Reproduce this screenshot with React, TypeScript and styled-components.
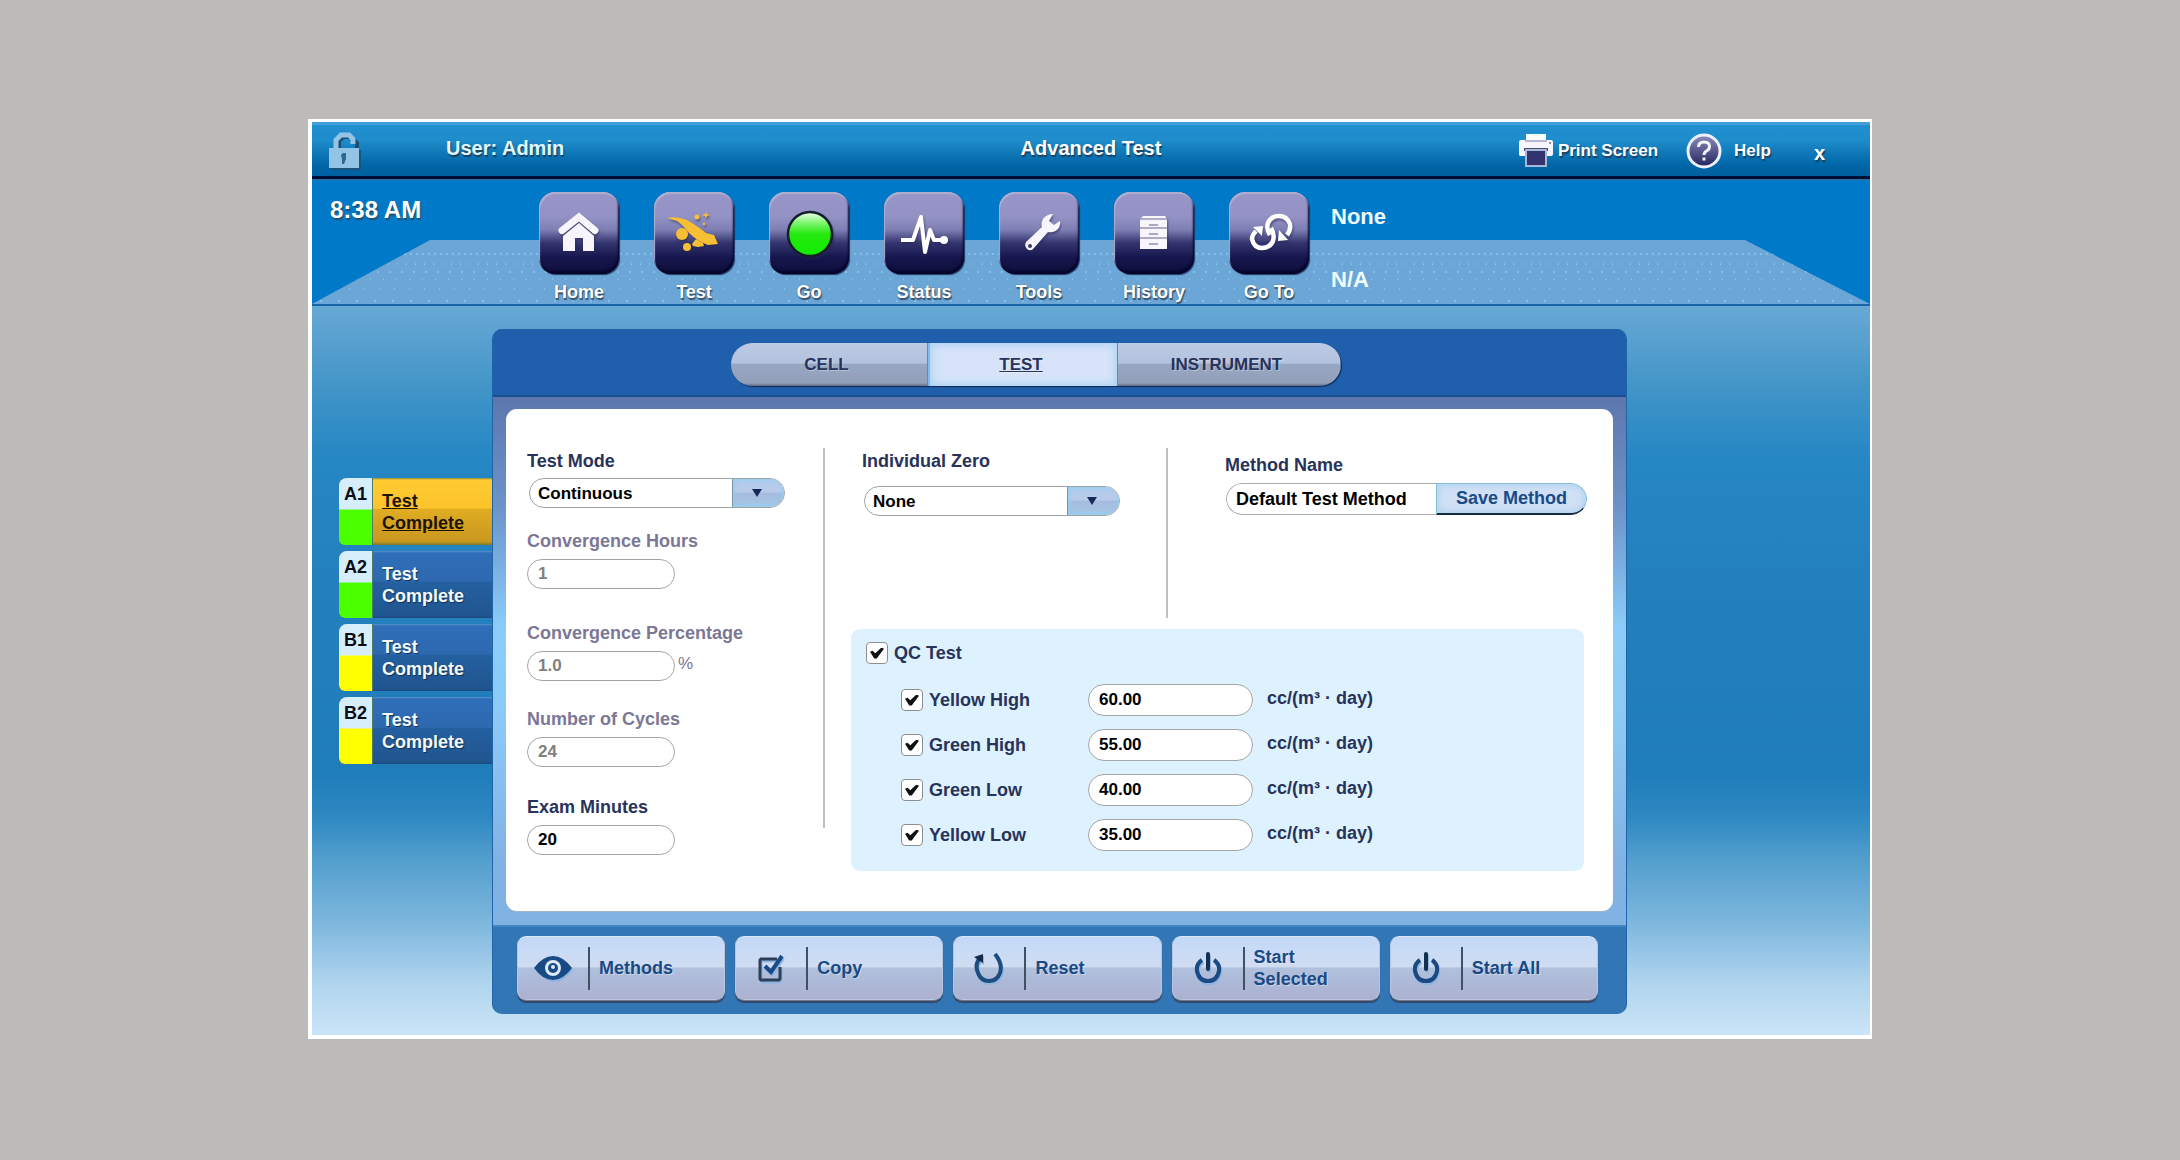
import React, { useState } from 'react';
import styled, { createGlobalStyle, css } from 'styled-components';

const font = '"Liberation Sans", Arial, sans-serif';
const ink = '#27335a';

const GlobalStyle = createGlobalStyle`
  *, *::before, *::after { box-sizing: border-box; }
  body { margin: 0; background: #bcbbb9; font-family: ${font}; font-weight: 700; }
  button, input, select { font-family: inherit; font-weight: inherit; margin: 0; }
`;

const Frame = styled.main`
  max-width: 1564px;
  margin: 119px auto;
  border: solid #fff;
  border-width: 3px 2px 4px 4px;
`;

/* ---------- title bar ---------- */
const TitleBar = styled.header`
  display: grid;
  grid-template-columns: 1fr auto 1fr;
  align-items: center;
  height: 58px;
  padding: 0 45px 3px 17px;
  border-top: 3px solid #45a0da;
  border-bottom: 1px solid #3c6c88;
  background: linear-gradient(#2190d0 0%, #1f8ccb 28%, #0f78b8 52%, #0065a6 76%, #00609f 94%, #00103a 95%, #00103a 100%);
  color: #fff;
  text-shadow: 1px 2px 1px #1c3f5e;
`;
const Side = styled.div`
  display: flex;
  align-items: center;
`;
const UserName = styled.span`
  margin-left: 85px;
  font-size: 20px;
  line-height: 24px;
  padding-bottom: 6px;
  color: #e2f8fd;
`;
const Title = styled.h1`
  margin: 0 0 6px 28px;
  font-size: 20px;
  line-height: 24px;
`;
const Tools = styled(Side)`
  justify-content: flex-end;
  gap: 28px;
`;
const BarButton = styled.button<{ $gap?: number }>`
  display: flex;
  align-items: center;
  gap: ${p => p.$gap ?? 4}px;
  padding: 0;
  border: 0;
  background: none;
  color: inherit;
  font-size: 17px;
  line-height: 22px;
  text-shadow: inherit;
  cursor: pointer;
`;
const CloseButton = styled(BarButton)`
  margin-left: 15px;
  padding-top: 4px;
  font-size: 20px;
`;

/* ---------- navigation ---------- */
const dot = 'radial-gradient(circle, #80c2ec 0, #80c2ec 1px, transparent 1px)';
const NavBar = styled.nav`
  position: relative;
  isolation: isolate;
  display: flex;
  align-items: flex-start;
  height: 126px;
  padding: 12px 0 0 18px;
  border-bottom: 2px solid #1a66ab;
  background: #0079c8;
  color: #fff;
  &::before {
    content: '';
    position: absolute;
    z-index: -1;
    inset: 60px 0 0 0;
    clip-path: polygon(118px 0, calc(100% - 125px) 0, 100% 100%, 0 100%);
    background:
      ${dot} 0 12px / 6px 4px repeat-x,
      ${dot} 0 22px / 9px 4px repeat-x,
      ${dot} 0 30px / 12px 4px repeat-x,
      ${dot} 0 37px / 13px 4px repeat-x,
      ${dot} 0 47px / 15px 4px repeat-x,
      ${dot} 0 59px / 18px 4px repeat-x,
      #6ca6d6;
  }
`;
const Clock = styled.time`
  flex: 0 0 209px;
  margin-top: 4px;
  font-size: 24px;
  line-height: 28px;
  text-shadow: 1px 2px 1px #24506f;
`;
const NavList = styled.div`
  display: flex;
  gap: 35px;
`;
const NavItem = styled.button`
  display: flex;
  flex-direction: column;
  align-items: center;
  gap: 7px;
  width: 80px;
  padding: 0;
  border: 0;
  background: none;
  color: #fff;
  font-size: 18px;
  line-height: 22px;
  text-shadow: 1px 2px 1px #37516c, 0 0 1px #37516c;
  cursor: pointer;
`;
const Tile = styled.span`
  display: block;
  width: 80px;
  height: 82px;
  border-radius: 16px;
  background:
    linear-gradient(#9896c8 0%, #9492c4 30%, #7e7fb4 46%, #34346f 62%, #16164e 80%, #0e0e3a 100%);
  box-shadow: inset 1px 2px 1px #b0aed0, inset -1px -3px 2px #06062c, 1px 1px 1px #1c3560;
  svg { display: block; width: 80px; height: 80px; filter: drop-shadow(1px 2px 1px #23234f88); }
`;
const Readout = styled.div`
  display: grid;
  gap: 37px;
  margin: 12px 0 0 22px;
  font-size: 22px;
  line-height: 26px;
  color: #effcff;
`;

/* ---------- work area ---------- */
const Work = styled.div`
  display: flex;
  align-items: flex-start;
  padding: 23px 243px 21px 27px;
  background: linear-gradient(#68a9d5 0%, #3f93c7 12%, #2587c4 21%, #2380bd 38%, #1f7dba 64%, #2e88c1 70%, #539fce 76%, #7ab5dc 84%, #b0d5ee 93%, #cbe5f8 100%);
`;
const Cells = styled.div`
  display: grid;
  gap: 6px;
  flex: 0 0 153px;
  margin-top: 149px;
`;
const CellText = styled.span`
  align-self: center;
  padding-left: 9px;
`;
const CellButton = styled.button<{ $active?: boolean }>`
  display: grid;
  grid-template-columns: 34px 1fr;
  height: 67px;
  padding: 0;
  border: 0;
  border-radius: 8px 0 0 6px;
  overflow: hidden;
  font-size: 18px;
  line-height: 22px;
  text-align: left;
  cursor: pointer;
  background: linear-gradient(#5b92cc 0, #2f6eb9 2px, #2e69b0 45%, #24609f 47%, #205590 97%, #1b4878 100%);
  color: #f4fbff;
  text-shadow: 1px 1px 1px #16304f;
  ${p => p.$active && css`
    background: linear-gradient(#8a8f4a 0, #ffcb31 2px, #fcc32b 45%, #e0ac22 47%, #c9981f 95%, #78782a 100%);
    color: #1c1206;
    text-shadow: none;
    ${CellText} { text-decoration: underline; }
  `}
`;
const CellCode = styled.span<{ $state: string }>`
  display: block;
  padding: 5px 0 0 5px;
  background: linear-gradient(#d6eefc 31px, ${p => p.$state} 32px);
  border-right: 1px solid #4c7c6a;
  color: #0a0d14;
  text-shadow: none;
`;

const Panel = styled.section`
  flex: 1;
  min-width: 0;
  border: solid #1f63a8;
  border-width: 0 1px;
  border-radius: 10px;
  overflow: hidden;
  background: #3276b5;
`;
const PanelHead = styled.div`
  display: flex;
  justify-content: center;
  height: 68px;
  padding: 14px 48px 0 0;
  border-bottom: 2px solid #1b4f93;
  background: #205fab;
`;
const TabSet = styled.div`
  display: grid;
  grid-template-columns: 197px 190px 223px;
  height: 43px;
  border-radius: 22px;
  overflow: hidden;
  box-shadow: 1px 1px 1px #14294c;
`;
const Tab = styled.button<{ $on?: boolean }>`
  border: 0;
  border-right: 1px solid #6d87b3;
  padding: 0 4px 0 0;
  font-size: 17px;
  line-height: 22px;
  color: ${ink};
  cursor: pointer;
  text-shadow: 1px 1px 0 #ffffff55;
  background: linear-gradient(#bccae4 0%, #b3c2de 47%, #98a7c2 49%, #929fb9 93%, #5e6c88 100%);
  ${p => p.$on && css`
    background: #d7e3f8;
    box-shadow: inset 0 0 8px 2px #a9d3f7;
    border-left: 2px solid #7fbaf2;
    text-decoration: underline;
  `}
`;
const PanelBody = styled.div`
  padding: 12px 13px 14px;
  background: linear-gradient(#5d77ae 0%, #6b92c8 20%, #8bcdfa 44%, #8cc8f6 62%, #80b3e3 88%, #80b3e3 100%);
`;
const Sheet = styled.div`
  display: grid;
  grid-template-columns: 317px 2px 1fr;
  align-items: start;
  padding: 39px 0 40px;
  border-radius: 11px;
  background: #fff;
  box-shadow: 0 1px 0 #9fb3c2;
`;
const Rule = styled.div<{ $h: number }>`
  height: ${p => p.$h}px;
  background: #c0c0c2;
`;

/* ---------- form ---------- */
const Settings = styled.div`
  display: grid;
  grid-template-rows: 80px 92px 86px 88px auto;
  padding: 2px 0 0 21px;
`;
const Field = styled.div<{ $gap?: number }>`
  display: flex;
  flex-direction: column;
  align-items: flex-start;
  gap: ${p => p.$gap ?? 7}px;
`;
const Label = styled.label<{ $dim?: boolean }>`
  font-size: 18px;
  line-height: 22px;
  color: ${p => (p.$dim ? '#7b7795' : ink)};
`;
const Line = styled.div`
  display: flex;
  gap: 3px;
`;
const Unit = styled.span`
  font-size: 17px;
  line-height: 26px;
  font-weight: 400;
  color: #7b7795;
`;
const TextBox = styled.input<{ $w: number; $tall?: boolean }>`
  width: ${p => p.$w}px;
  height: ${p => (p.$tall ? 32 : 30)}px;
  padding: 0 10px;
  border: 1px solid #a3a6a4;
  border-radius: 16px;
  background: #fff;
  color: #000;
  font-size: 17px;
  &:disabled { color: #808080; }
`;
const SelectBox = styled.div`
  display: grid;
  grid-template-columns: 1fr 52px;
  width: 256px;
  height: 30px;
  margin-left: 2px;
  border: 1px solid #9ea3a3;
  border-radius: 15px;
  overflow: hidden;
  background: #fff;
  select {
    grid-area: 1 / 1 / 2 / 3;
    appearance: none;
    width: 100%;
    padding: 0 56px 0 8px;
    border: 0;
    background: transparent;
    color: #000;
    font-size: 17px;
  }
`;
const Arrow = styled.span`
  grid-area: 1 / 2;
  display: grid;
  place-items: center;
  padding-right: 3px;
  pointer-events: none;
  border-left: 1px solid #7f95a6;
  background: linear-gradient(#b3cbed 0%, #b9cbeb 45%, #a5bcdf 52%, #a7c6e4 100%);
  box-shadow: inset 0 0 5px 1px #8fd0f0;
`;
const TopRow = styled.div`
  display: grid;
  grid-template-columns: 341px 2px 1fr;
`;
const ZeroCol = styled.div`padding: 2px 0 0 37px;`;
const MethodCol = styled.div`padding: 6px 0 0 57px;`;
const MethodBox = styled.div`
  display: flex;
  width: 361px;
  height: 32px;
  margin-left: 1px;
  border-radius: 16px;
  overflow: hidden;
  input {
    flex: 1;
    min-width: 0;
    padding: 0 0 0 9px;
    border: 1px solid #a8abaa;
    border-right: 0;
    border-radius: 16px 0 0 16px;
    background: #fff;
    color: #000;
    font-size: 18px;
  }
`;
const SaveButton = styled.button`
  width: 151px;
  padding: 0;
  border: solid #86bfdc;
  border-width: 1px 1px 2px 1px;
  border-bottom-color: #142c40;
  border-radius: 0 16px 16px 0;
  background: #d2e0f6;
  box-shadow: inset 0 0 7px 2px #b0d4f0;
  color: #174b89;
  font-size: 18px;
  cursor: pointer;
`;
const QcBox = styled.div`
  margin: 11px 29px 0 26px;
  padding: 13px 15px 20px;
  border-radius: 9px;
  background: #def1fe;
`;
const QcRows = styled.div`
  display: grid;
  gap: 13px;
  margin: 20px 0 0 35px;
`;
const QcRow = styled.div`
  display: grid;
  grid-template-columns: 187px 165px 1fr;
  align-items: center;
`;
const CheckLabel = styled.label`
  display: flex;
  align-items: center;
  gap: 6px;
  font-size: 18px;
  line-height: 22px;
  color: ${ink};
`;
const Check = styled.input`
  appearance: none;
  display: grid;
  place-items: center;
  width: 22px;
  height: 22px;
  border: 1px solid #8c8f92;
  border-radius: 4px;
  background: #fff;
  &:checked::before {
    content: '';
    width: 14px;
    height: 11px;
    background: #111;
    clip-path: polygon(0 38%, 18% 30%, 38% 52%, 82% 0, 100% 12%, 48% 100%, 30% 100%);
  }
`;
const QcUnit = styled.span`
  padding: 0 0 4px 14px;
  font-size: 18px;
  line-height: 22px;
  color: ${ink};
`;

/* ---------- footer ---------- */
const Footer = styled.footer`
  display: flex;
  gap: 10px;
  height: 89px;
  padding: 9px 28px 0 24px;
  border-top: 2px solid #4388c4;
`;
const Action = styled.button`
  flex: 1;
  display: grid;
  grid-template-columns: 70px 2px 1fr;
  align-items: center;
  height: 64px;
  padding: 0;
  border: 1px solid #b8c6df;
  border-top-color: #dce8fa;
  border-radius: 9px;
  background: linear-gradient(#c3d8f6 0%, #c9dbf6 22%, #d0dcf0 48%, #b0c1dd 50%, #adb9d8 72%, #adb1d0 100%);
  box-shadow: 0 1px 0 #73788a, 0 3px 1px #31486a;
  color: #194a86;
  font-size: 18px;
  line-height: 22px;
  text-align: left;
  text-shadow: 1px 1px 0 #ffffff66;
  cursor: pointer;
  svg { justify-self: center; display: block; filter: drop-shadow(1px 2px 0 #8fb4e0); }
  i { height: 43px; background: #3f5264; }
  span { max-width: 110px; padding-left: 9px; }
`;

/* ---------- drawings ---------- */
const LockIcon = () => (
  <svg width="32" height="40" viewBox="0 0 32 40" aria-hidden="true">
    <path d="M10 19V10l4-4h8l6 6v5" fill="none" stroke="#1f4d6d" strokeWidth="4" />
    <path d="M2 19h30v20H2z" fill="#1c5480" />
    <path d="M7 18V9l5-5h8l4 4v5" fill="none" stroke="#93c4e6" strokeWidth="5" />
    <path d="M0 17h30v20H0z" fill="#93c4e6" />
    <path d="M12 24l2-2h3v6l-2 5h-2v-5z" fill="#2f6790" />
  </svg>
);
const PrinterIcon = () => (
  <svg width="36" height="36" viewBox="0 0 36 36" aria-hidden="true">
    <path d="M8 1h20v7H8z" fill="#fff" />
    <path d="M1 9q0-2 2-2h30q2 0 2 2v12q0 2-2 2H2q-1 0-1-2z" fill="#f6f5fb" />
    <path d="M7 8h22" stroke="#b9b7d2" strokeWidth="2" />
    <path d="M6 15h24v3H6z" fill="#4d4c70" />
    <path d="M8 17h20v16H8z" fill="#33336f" stroke="#a9b8d8" strokeWidth="2" />
    <circle cx="32" cy="10" r="1" fill="#6b6b8b" />
  </svg>
);
const HelpIcon = () => (
  <svg width="36" height="36" viewBox="0 0 36 36" aria-hidden="true">
    <defs>
      <linearGradient id="help" x1="0" y1="0" x2="0" y2="1">
        <stop offset="0" stopColor="#8d8cbb" />
        <stop offset="1" stopColor="#22225e" />
      </linearGradient>
    </defs>
    <circle cx="18" cy="18" r="16" fill="url(#help)" stroke="#eef1fa" strokeWidth="3" />
    <path d="M12.500 14q0-5 5.500-5t5.500 4.500q0 3-3 4.500-2.500 1.500-2.500 4" fill="none" stroke="#f3f3fb" strokeWidth="3" />
    <path d="M16.500 24.500h3v3h-3z" fill="#f3f3fb" />
  </svg>
);
const HomeIcon = () => (
  <svg viewBox="0 0 80 80" aria-hidden="true">
    <path d="M22 42l18-15 17 15" fill="none" stroke="#4b4a78" strokeWidth="6" />
    <path d="M24 44l16-13 15 13v15H44V46h-8v13H24z" fill="#f7f4fb" />
    <path d="M23 38.500L40 25l16 13.500" fill="none" stroke="#f7f4fb" strokeWidth="7" strokeLinecap="round" />
  </svg>
);
const CometIcon = () => (
  <svg viewBox="0 0 80 80" aria-hidden="true" fill="#f7bf33">
    <path d="M13 26q10-2 20 2 12 7 19 13l8 2 4 9-10 1q-11-4-19-12-7-9-12-12z" />
    <circle cx="28" cy="42" r="6" />
    <circle cx="33" cy="55" r="4" />
    <path d="M38 52l4-5 7 4 1 3-6 1-5-1z" />
    <circle cx="43" cy="25" r="2.500" />
    <path d="M52 20l1 2 3 1-3 1-1 3-1-3-3-1 3-1z" />
    <circle cx="50" cy="32" r="1.200" />
  </svg>
);
const GoIcon = () => (
  <svg viewBox="0 0 80 80" aria-hidden="true">
    <defs>
      <linearGradient id="go" x1="0" y1="0" x2="0" y2="1">
        <stop offset="0" stopColor="#f2fff0" />
        <stop offset="0.250" stopColor="#7df56c" />
        <stop offset="0.500" stopColor="#25e80f" />
        <stop offset="1" stopColor="#10ee00" />
      </linearGradient>
    </defs>
    <circle cx="41" cy="42" r="22" fill="url(#go)" stroke="#13202a" strokeWidth="2.500" />
  </svg>
);
const PulseIcon = () => (
  <svg viewBox="0 0 80 80" aria-hidden="true">
    <path d="M17 48h12l8-23 4 35 5-22 4 10h9" fill="none" stroke="#fff" strokeWidth="4" strokeLinejoin="round" />
    <circle cx="60" cy="48" r="4" fill="#fff" />
  </svg>
);
const WrenchIcon = () => (
  <svg viewBox="0 0 80 80" aria-hidden="true">
    <path d="M54 22q-6 0-10 5-2 4-1 8L27 50q-2 4 1 7 4 3 7-1l14-16q5 1 9-2 4-4 3-9l-6 4-5-4z" fill="#f8f6fc" />
    <circle cx="31" cy="54" r="2" fill="#3a3a72" />
  </svg>
);
const CabinetIcon = () => (
  <svg viewBox="0 0 80 80" aria-hidden="true">
    <path d="M29 24h22l2 3v30H26V27z" fill="#f8f6fc" />
    <path d="M26 27h27M26 36h27M26 46h27" stroke="#9494b8" strokeWidth="1.500" />
    <path d="M35 32h9v2h-9zM35 41h9v2h-9zM35 51h9v2h-9z" fill="#a9a9c4" />
  </svg>
);
const CycleIcon = () => (
  <svg viewBox="0 0 80 80" aria-hidden="true" fill="none" stroke="#fff" strokeWidth="4.500">
    <path d="M41 43q-4-6-2-12 3-7 11-7t11 8q1 6-3 11" />
    <path d="M42 36q4 6 2 13-3 7-11 7t-10-9q0-4 4-8" />
    <path d="M49 49l1-11 9 10z" fill="#fff" stroke="none" />
    <path d="M24 35l10-1-1 10z" fill="#fff" stroke="none" />
  </svg>
);
const EyeIcon = () => (
  <svg width="40" height="28" viewBox="0 0 40 28" aria-hidden="true">
    <path d="M1 14Q10 2 20 2t19 12Q30 26 20 26T1 14z" fill="#184a85" />
    <circle cx="20" cy="14" r="8" fill="#dfe8f6" />
    <circle cx="20" cy="14" r="5" fill="#184a85" />
    <circle cx="20" cy="13" r="2" fill="#dfe8f6" />
  </svg>
);
const CheckboxIcon = () => (
  <svg width="26" height="28" viewBox="0 0 26 28" aria-hidden="true" fill="none">
    <path d="M19 5H3L2 6v19l1 1h18l1-1V13" stroke="#2d4058" strokeWidth="3" />
    <path d="M7 12l6 6L24 2" stroke="#174a87" strokeWidth="4" />
  </svg>
);
const ResetIcon = () => (
  <svg width="30" height="32" viewBox="0 0 30 32" aria-hidden="true" fill="none">
    <path d="M7 5Q0 12 4 21q3 8 11 8t11-8q3-9-5-19" stroke="#1c4c80" strokeWidth="4" />
    <path d="M0 5l9-3v9z" fill="#172b48" />
  </svg>
);
const PowerIcon = () => (
  <svg width="28" height="34" viewBox="0 0 28 34" aria-hidden="true" fill="none">
    <path d="M8 9Q2 13 3 20q2 10 11 10t11-10q1-7-5-11" stroke="#194a84" strokeWidth="4" />
    <path d="M14 3v15" stroke="#16304f" strokeWidth="4" strokeLinecap="round" />
  </svg>
);

const navItems = [
  ['Home', HomeIcon], ['Test', CometIcon], ['Go', GoIcon], ['Status', PulseIcon],
  ['Tools', WrenchIcon], ['History', CabinetIcon], ['Go To', CycleIcon],
] as const;

const cells = [
  { code: 'A1', state: '#4cff00' },
  { code: 'A2', state: '#4cff00' },
  { code: 'B1', state: '#ffff00' },
  { code: 'B2', state: '#ffff00' },
];

const limits = [
  { name: 'Yellow High', value: '60.00' },
  { name: 'Green High', value: '55.00' },
  { name: 'Green Low', value: '40.00' },
  { name: 'Yellow Low', value: '35.00' },
];

const actions = [
  ['Methods', EyeIcon], ['Copy', CheckboxIcon], ['Reset', ResetIcon],
  ['Start Selected', PowerIcon], ['Start All', PowerIcon],
] as const;

function Dropdown({ id, options }: { id: string; options: string[] }) {
  return (
    <SelectBox>
      <select id={id}>
        {options.map(o => <option key={o}>{o}</option>)}
      </select>
      <Arrow>
        <svg width="10" height="8" viewBox="0 0 10 8" aria-hidden="true">
          <path d="M0 0h10L5 8z" fill="#15295a" />
        </svg>
      </Arrow>
    </SelectBox>
  );
}

export default function App() {
  const [cell, setCell] = useState('A1');
  const [tab, setTab] = useState('TEST');

  return (
    <>
      <GlobalStyle />
      <Frame>
        <TitleBar>
          <Side>
            <LockIcon />
            <UserName>User: Admin</UserName>
          </Side>
          <Title>Advanced Test</Title>
          <Tools>
            <BarButton><PrinterIcon />Print Screen</BarButton>
            <BarButton $gap={12}><HelpIcon />Help</BarButton>
            <CloseButton aria-label="Close">x</CloseButton>
          </Tools>
        </TitleBar>

        <NavBar>
          <Clock>8:38 AM</Clock>
          <NavList>
            {navItems.map(([name, Icon]) => (
              <NavItem key={name}><Tile><Icon /></Tile>{name}</NavItem>
            ))}
          </NavList>
          <Readout><span>None</span><span>N/A</span></Readout>
        </NavBar>

        <Work>
          <Cells>
            {cells.map(c => (
              <CellButton key={c.code} $active={c.code === cell} onClick={() => setCell(c.code)}>
                <CellCode $state={c.state}>{c.code}</CellCode>
                <CellText>Test<br />Complete</CellText>
              </CellButton>
            ))}
          </Cells>

          <Panel>
            <PanelHead>
              <TabSet role="tablist">
                {['CELL', 'TEST', 'INSTRUMENT'].map(t => (
                  <Tab key={t} role="tab" aria-selected={t === tab} $on={t === tab} onClick={() => setTab(t)}>{t}</Tab>
                ))}
              </TabSet>
            </PanelHead>

            <PanelBody>
              <Sheet>
                <Settings>
                  <Field $gap={6}>
                    <Label htmlFor="mode">Test Mode</Label>
                    <Dropdown id="mode" options={['Continuous']} />
                  </Field>
                  <Field>
                    <Label $dim htmlFor="hours">Convergence Hours</Label>
                    <TextBox $w={148} id="hours" defaultValue="1" disabled />
                  </Field>
                  <Field>
                    <Label $dim htmlFor="percent">Convergence Percentage</Label>
                    <Line>
                      <TextBox $w={148} id="percent" defaultValue="1.0" disabled />
                      <Unit>%</Unit>
                    </Line>
                  </Field>
                  <Field>
                    <Label $dim htmlFor="cycles">Number of Cycles</Label>
                    <TextBox $w={148} id="cycles" defaultValue="24" disabled />
                  </Field>
                  <Field>
                    <Label htmlFor="minutes">Exam Minutes</Label>
                    <TextBox $w={148} id="minutes" defaultValue="20" />
                  </Field>
                </Settings>
                <Rule $h={380} />
                <div>
                  <TopRow>
                    <ZeroCol>
                      <Field $gap={14}>
                        <Label htmlFor="zero">Individual Zero</Label>
                        <Dropdown id="zero" options={['None']} />
                      </Field>
                    </ZeroCol>
                    <Rule $h={170} />
                    <MethodCol>
                      <Field>
                        <Label htmlFor="method">Method Name</Label>
                        <MethodBox>
                          <input id="method" defaultValue="Default Test Method" />
                          <SaveButton>Save Method</SaveButton>
                        </MethodBox>
                      </Field>
                    </MethodCol>
                  </TopRow>
                  <QcBox>
                    <CheckLabel><Check type="checkbox" defaultChecked />QC Test</CheckLabel>
                    <QcRows>
                      {limits.map(l => (
                        <QcRow key={l.name}>
                          <CheckLabel><Check type="checkbox" defaultChecked />{l.name}</CheckLabel>
                          <TextBox $w={165} $tall aria-label={`${l.name} limit`} defaultValue={l.value} />
                          <QcUnit>cc/(m³ · day)</QcUnit>
                        </QcRow>
                      ))}
                    </QcRows>
                  </QcBox>
                </div>
              </Sheet>
            </PanelBody>

            <Footer>
              {actions.map(([name, Icon]) => (
                <Action key={name}><Icon /><i /><span>{name}</span></Action>
              ))}
            </Footer>
          </Panel>
        </Work>
      </Frame>
    </>
  );
}
